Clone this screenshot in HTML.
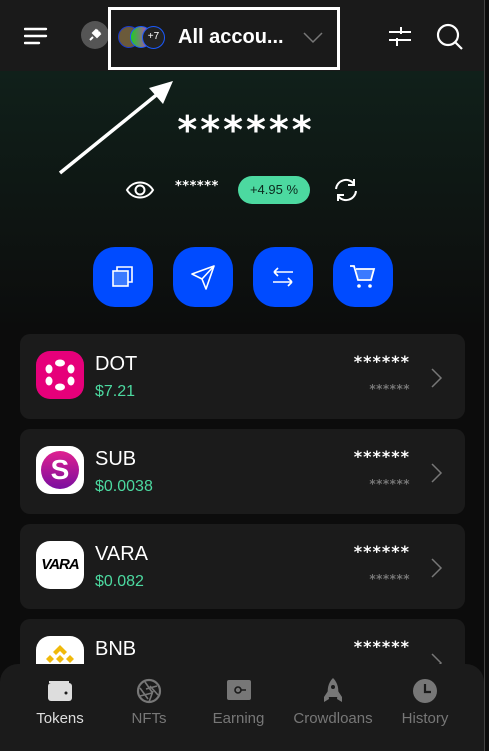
<!DOCTYPE html>
<html><head><meta charset="utf-8"><style>
*{margin:0;padding:0;box-sizing:border-box}
body{width:489px;height:751px;overflow:hidden;background:#0c0c0c;font-family:"Liberation Sans",sans-serif;color:#fff;position:relative}
.hdr{position:absolute;left:0;top:0;width:489px;height:71px;background:#1a1a1a}
.grad{position:absolute;left:0;top:71px;width:489px;height:260px;background:linear-gradient(#10201a,#0c0c0c)}
.card{position:absolute;left:20px;width:445px;height:85px;background:#1b1b1b;border-radius:10px}
.ico{position:absolute;left:16px;top:17px;width:48px;height:48px;border-radius:14px}
.nm{position:absolute;left:75px;top:19px;font-size:20px}
.pr{position:absolute;left:75px;top:49px;font-size:16px;color:#4cd9a0}
.st{font-family:"DejaVu Sans",sans-serif;font-weight:bold}
.s1{position:absolute;right:55px;top:18px;font-size:16px;letter-spacing:1px}
.s2{position:absolute;right:55px;top:48px;font-size:12px;color:#777;letter-spacing:0.5px}
.chev{position:absolute;right:22px;top:34px}
.btn{position:absolute;top:247px;width:60px;height:60px;border-radius:22px;background:#004bff;display:flex;align-items:center;justify-content:center}
.nav{position:absolute;left:0;top:664px;width:484px;height:87px;background:#1b1b1b;border-radius:18px 18px 0 0}
.ni{position:absolute;top:13px;text-align:center;font-size:15px;color:#777}
.ni .ic{height:28px;display:flex;align-items:center;justify-content:center}
.ni div.t{margin-top:5px}
</style></head><body>
<div class="hdr"></div>
<div class="grad"></div>
<div style="position:absolute;left:484px;top:0;width:5px;height:751px;background:#0c0c0c;border-left:1px solid #444"></div>
<svg style="position:absolute;left:24px;top:27px" width="24" height="18"><path d="M1 2h21M1 9h21M1 16h14" stroke="#fff" stroke-width="2.4" stroke-linecap="round"/></svg>
<div style="position:absolute;left:81px;top:21px;width:28px;height:28px;border-radius:50%;background:#555"></div>
<svg style="position:absolute;left:87px;top:27px" width="16" height="16"><path d="M3 13l3-3M6 6l4 4 3-3-4-4zM9 5l2-2M11 7l2-2" stroke="#fff" stroke-width="2" fill="#fff"/></svg>
<div style="position:absolute;left:108px;top:7px;width:232px;height:63px;border:3px solid #fff;background:#1a1a1a"></div>
<div style="position:absolute;left:118px;top:26px;width:22px;height:22px;border-radius:50%;background:#6b5a3a;border:1.5px solid #1a3ad0"></div>
<div style="position:absolute;left:130px;top:26px;width:22px;height:22px;border-radius:50%;background:linear-gradient(90deg,#2c2,#c3c);border:1.5px solid #1a5aff"></div>
<div style="position:absolute;left:142px;top:26px;width:23px;height:23px;border-radius:50%;background:#222;border:1.5px solid #1a5aff;font-size:10px;text-align:center;line-height:20px">+7</div>
<div style="position:absolute;left:178px;top:26px;font-size:20px;font-weight:bold">All accou...</div>
<svg style="position:absolute;left:303px;top:32px" width="20" height="12"><path d="M1 1l9 9 9-9" stroke="#777" stroke-width="1.5" fill="none"/></svg>
<svg style="position:absolute;left:388px;top:25px" width="24" height="22"><path d="M1 7h22M1 15h22" stroke="#fff" stroke-width="2"/><path d="M13 2v7M9 13v8" stroke="#fff" stroke-width="2"/></svg>
<svg style="position:absolute;left:436px;top:23px" width="28" height="28"><circle cx="12" cy="12" r="10" stroke="#fff" stroke-width="2.2" fill="none"/><path d="M19 19l7 7" stroke="#fff" stroke-width="2.2"/></svg>
<svg style="position:absolute;left:55px;top:78px" width="125" height="100"><path d="M5 95L110 10" stroke="#fff" stroke-width="3.5"/><path d="M118 3L94 10L108 26Z" fill="#fff"/></svg>
<div class="st" style="position:absolute;left:0;width:489px;top:108px;text-align:center;font-size:38px;letter-spacing:3px;padding-left:3px">******</div>
<svg style="position:absolute;left:125px;top:178px" width="30" height="24"><path d="M2 12C8 2 22 2 28 12C22 22 8 22 2 12Z" stroke="#fff" stroke-width="2" fill="none"/><circle cx="15" cy="12" r="4.5" stroke="#fff" stroke-width="2" fill="none"/></svg>
<div class="st" style="position:absolute;left:175px;top:179px;font-size:13px;letter-spacing:0.5px">******</div>
<div style="position:absolute;left:238px;top:176px;width:72px;height:28px;border-radius:14px;background:#4cd9a0;color:#0c2a1e;font-size:13px;text-align:center;line-height:28px">+4.95 %</div>
<svg style="position:absolute;left:332px;top:177px" width="28" height="26"><path d="M4 12A10 10 0 0 1 22 7M24 14A10 10 0 0 1 6 19" stroke="#fff" stroke-width="2" fill="none"/><path d="M22 2v6h-6M6 24v-6h6" stroke="#fff" stroke-width="2" fill="none"/></svg>
<div class="btn" style="left:93px"><svg width="24" height="24"><rect x="2" y="6" width="15" height="15" stroke="#fff" stroke-width="1.6" fill="#3a7aff"/><path d="M6 6V2h15v15h-4" stroke="#fff" stroke-width="1.6" fill="none"/></svg></div>
<div class="btn" style="left:173px"><svg width="26" height="26"><path d="M2 10L24 2L16 25L12 15Z" stroke="#fff" stroke-width="1.6" fill="none" stroke-linejoin="round"/><path d="M12 15L24 2" stroke="#fff" stroke-width="1.6"/></svg></div>
<div class="btn" style="left:253px"><svg width="24" height="24"><path d="M3 7h19M3 7l4-4M3 7l4 4M21 17H2M21 17l-4-4M21 17l-4 4" stroke="#fff" stroke-width="1.6" fill="none"/></svg></div>
<div class="btn" style="left:333px"><svg width="28" height="26"><path d="M1 2h4l4 14h13l3-11H7" stroke="#fff" stroke-width="1.8" fill="#3a7aff"/><circle cx="10" cy="22" r="1.8" fill="#fff"/><circle cx="21" cy="22" r="1.8" fill="#fff"/></svg></div>
<div class="card" style="top:334px"><div class="ico" style="background:#e6007a"><svg width="48" height="48"><ellipse cx="24" cy="12" rx="5" ry="3.5" fill="#fff"/><ellipse cx="24" cy="36" rx="5" ry="3.5" fill="#fff"/><ellipse cx="13" cy="18" rx="3.5" ry="4.5" fill="#fff"/><ellipse cx="35" cy="18" rx="3.5" ry="4.5" fill="#fff"/><ellipse cx="13" cy="30" rx="3.5" ry="4.5" fill="#fff"/><ellipse cx="35" cy="30" rx="3.5" ry="4.5" fill="#fff"/></svg></div><div class="nm">DOT</div><div class="pr">$7.21</div><div class="s1 st">******</div><div class="s2 st">******</div><svg class="chev" width="12" height="20"><path d="M1 1l9 9-9 9" stroke="#777" stroke-width="1.5" fill="none"/></svg></div>
<div class="card" style="top:429px"><div class="ico" style="background:#fff"><div style="position:absolute;left:5px;top:5px;width:38px;height:38px;border-radius:50%;background:linear-gradient(#e0208f,#7a0ea0);color:#fff;font-size:28px;font-weight:bold;text-align:center;line-height:38px">S</div></div><div class="nm">SUB</div><div class="pr">$0.0038</div><div class="s1 st">******</div><div class="s2 st">******</div><svg class="chev" width="12" height="20"><path d="M1 1l9 9-9 9" stroke="#777" stroke-width="1.5" fill="none"/></svg></div>
<div class="card" style="top:524px"><div class="ico" style="background:#fff;color:#000;font-size:15px;font-weight:bold;text-align:center;line-height:48px;letter-spacing:-1px;font-style:italic">VARA</div><div class="nm">VARA</div><div class="pr">$0.082</div><div class="s1 st">******</div><div class="s2 st">******</div><svg class="chev" width="12" height="20"><path d="M1 1l9 9-9 9" stroke="#777" stroke-width="1.5" fill="none"/></svg></div>
<div class="card" style="top:619px"><div class="ico" style="background:#fff;overflow:hidden"><svg width="48" height="48"><path d="M24 9l7 7-3 3-4-4-4 4-3-3zM10 23l4-4 4 4-4 4zM30 23l4-4 4 4-4 4zM24 19l4 4-4 4-4-4z" fill="#f0b90b"/></svg></div><div class="nm">BNB</div><div class="s1 st">******</div><svg class="chev" width="12" height="20"><path d="M1 1l9 9-9 9" stroke="#777" stroke-width="1.5" fill="none"/></svg></div>
<div class="nav">
<div class="ni" style="left:30px;width:60px;color:#ddd"><div class="ic"><svg width="26" height="22"><rect x="1" y="3" width="24" height="18" rx="3" fill="#ddd"/><path d="M3 3V2h18v1" stroke="#ddd" stroke-width="2"/><circle cx="19" cy="13" r="1.5" fill="#1b1b1b"/></svg></div><div class="t">Tokens</div></div>
<div class="ni" style="left:119px;width:60px"><div class="ic"><svg width="26" height="26"><circle cx="13" cy="13" r="11" stroke="#777" stroke-width="2.2" fill="none"/><path d="M9 4l7 10M21 8l-11 3M22 17l-8-9M13 24l4-11M4 18l12-3M4 10l8 11" stroke="#777" stroke-width="1.6"/></svg></div><div class="t">NFTs</div></div>
<div class="ni" style="left:206px;width:65px"><div class="ic"><svg width="26" height="26"><rect x="1" y="2" width="24" height="20" rx="2" fill="#777"/><circle cx="12" cy="12" r="3" stroke="#1b1b1b" stroke-width="1.6" fill="none"/><path d="M15 12h5M4 22v3M22 22v3" stroke="#1b1b1b" stroke-width="1.6"/></svg></div><div class="t">Earning</div></div>
<div class="ni" style="left:287px;width:92px"><div class="ic"><svg width="26" height="28"><path d="M13 1C8 6 7 12 8 20h10c1-8 0-14-5-19z" fill="#777"/><path d="M8 14l-4 6v5l5-3M18 14l4 6v5l-5-3" fill="#777"/><circle cx="13" cy="10" r="2" fill="#1b1b1b"/></svg></div><div class="t">Crowdloans</div></div>
<div class="ni" style="left:395px;width:60px"><div class="ic"><svg width="26" height="26"><circle cx="13" cy="13" r="12" fill="#777"/><path d="M13 6v8h6" stroke="#1b1b1b" stroke-width="2.2" fill="none"/></svg></div><div class="t">History</div></div>
</div>
</body></html>
